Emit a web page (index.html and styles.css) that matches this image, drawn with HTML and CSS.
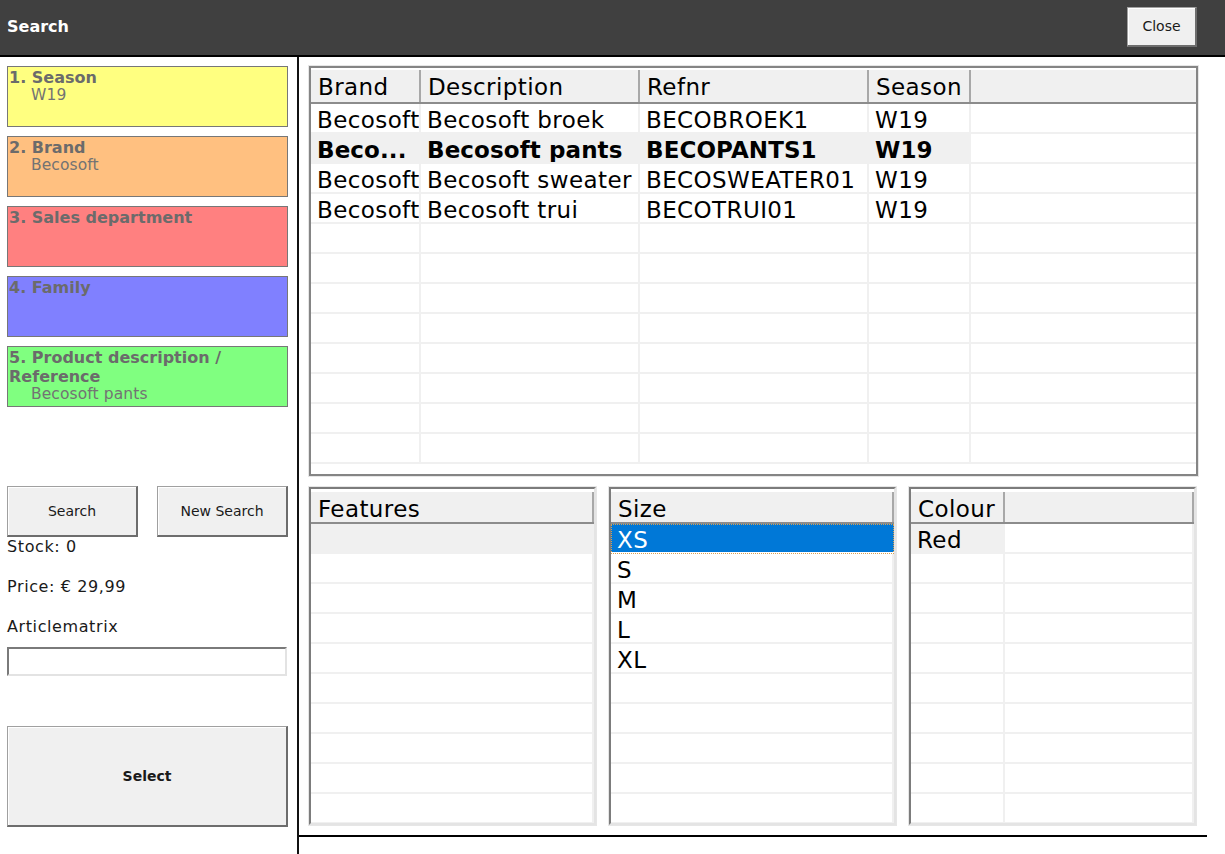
FILE: index.html
```html
<!DOCTYPE html>
<html lang="en">
<head>
    <meta charset="UTF-8">
    <meta name="viewport" content="width=device-width, initial-scale=1.0">
    <title>Search</title>
    <link rel="stylesheet" href="styles.css">
</head>
<body>
    <!-- top bar -->
    <header class="topbar">
        <span class="topbar-title">Search</span>
        <button class="btn btn-close">Close</button>
    </header>

    <div class="layout">
        <!-- left: filters -->
        <aside class="sidebar">
            <div class="filter filter-season">
                <div class="filter-title">1. Season</div>
                <div class="filter-value">W19</div>
            </div>
            <div class="filter filter-brand">
                <div class="filter-title">2. Brand</div>
                <div class="filter-value">Becosoft</div>
            </div>
            <div class="filter filter-dept">
                <div class="filter-title">3. Sales department</div>
            </div>
            <div class="filter filter-family">
                <div class="filter-title">4. Family</div>
            </div>
            <div class="filter filter-product">
                <div class="filter-title">5. Product description / Reference</div>
                <div class="filter-value">Becosoft pants</div>
            </div>

            <div class="actions">
                <button class="btn btn-action">Search</button>
                <button class="btn btn-action">New Search</button>
            </div>
            <p class="info">Stock: 0</p>
            <p class="info">Price: € 29,99</p>
            <p class="info info-label">Articlematrix</p>
            <input class="matrix-input" type="text">
            <button class="btn btn-select">Select</button>
        </aside>

        <!-- right: results -->
        <main class="content">
            <div class="grid grid-articles">
                <div class="row head">
                    <div class="cell">Brand</div>
                    <div class="cell">Description</div>
                    <div class="cell">Refnr</div>
                    <div class="cell">Season</div>
                    <div class="cell"></div>
                </div>
                <div class="row">
                    <div class="cell">Becosoft</div>
                    <div class="cell">Becosoft broek</div>
                    <div class="cell">BECOBROEK1</div>
                    <div class="cell">W19</div>
                    <div class="cell"></div>
                </div>
                <div class="row current">
                    <div class="cell">Beco...</div>
                    <div class="cell">Becosoft pants</div>
                    <div class="cell">BECOPANTS1</div>
                    <div class="cell">W19</div>
                    <div class="cell"></div>
                </div>
                <div class="row">
                    <div class="cell">Becosoft</div>
                    <div class="cell">Becosoft sweater</div>
                    <div class="cell">BECOSWEATER01</div>
                    <div class="cell">W19</div>
                    <div class="cell"></div>
                </div>
                <div class="row">
                    <div class="cell">Becosoft</div>
                    <div class="cell">Becosoft trui</div>
                    <div class="cell">BECOTRUI01</div>
                    <div class="cell">W19</div>
                    <div class="cell"></div>
                </div>
                <div class="row"><div class="cell"></div><div class="cell"></div><div class="cell"></div><div class="cell"></div><div class="cell"></div></div>
                <div class="row"><div class="cell"></div><div class="cell"></div><div class="cell"></div><div class="cell"></div><div class="cell"></div></div>
                <div class="row"><div class="cell"></div><div class="cell"></div><div class="cell"></div><div class="cell"></div><div class="cell"></div></div>
                <div class="row"><div class="cell"></div><div class="cell"></div><div class="cell"></div><div class="cell"></div><div class="cell"></div></div>
                <div class="row"><div class="cell"></div><div class="cell"></div><div class="cell"></div><div class="cell"></div><div class="cell"></div></div>
                <div class="row"><div class="cell"></div><div class="cell"></div><div class="cell"></div><div class="cell"></div><div class="cell"></div></div>
                <div class="row"><div class="cell"></div><div class="cell"></div><div class="cell"></div><div class="cell"></div><div class="cell"></div></div>
                <div class="row"><div class="cell"></div><div class="cell"></div><div class="cell"></div><div class="cell"></div><div class="cell"></div></div>
            </div>

            <div class="subgrids">
                <div class="grid grid-single">
                    <div class="row head"><div class="cell">Features</div></div>
                    <div class="row current"><div class="cell"></div></div>
                    <div class="row"><div class="cell"></div></div>
                    <div class="row"><div class="cell"></div></div>
                    <div class="row"><div class="cell"></div></div>
                    <div class="row"><div class="cell"></div></div>
                    <div class="row"><div class="cell"></div></div>
                    <div class="row"><div class="cell"></div></div>
                    <div class="row"><div class="cell"></div></div>
                    <div class="row"><div class="cell"></div></div>
                    <div class="row"><div class="cell"></div></div>
                </div>
                <div class="grid grid-single">
                    <div class="row head"><div class="cell">Size</div></div>
                    <div class="row selected"><div class="cell">XS</div></div>
                    <div class="row"><div class="cell">S</div></div>
                    <div class="row"><div class="cell">M</div></div>
                    <div class="row"><div class="cell">L</div></div>
                    <div class="row"><div class="cell">XL</div></div>
                    <div class="row"><div class="cell"></div></div>
                    <div class="row"><div class="cell"></div></div>
                    <div class="row"><div class="cell"></div></div>
                    <div class="row"><div class="cell"></div></div>
                    <div class="row"><div class="cell"></div></div>
                </div>
                <div class="grid grid-colour">
                    <div class="row head"><div class="cell">Colour</div><div class="cell"></div></div>
                    <div class="row"><div class="cell marked">Red</div><div class="cell"></div></div>
                    <div class="row"><div class="cell"></div><div class="cell"></div></div>
                    <div class="row"><div class="cell"></div><div class="cell"></div></div>
                    <div class="row"><div class="cell"></div><div class="cell"></div></div>
                    <div class="row"><div class="cell"></div><div class="cell"></div></div>
                    <div class="row"><div class="cell"></div><div class="cell"></div></div>
                    <div class="row"><div class="cell"></div><div class="cell"></div></div>
                    <div class="row"><div class="cell"></div><div class="cell"></div></div>
                    <div class="row"><div class="cell"></div><div class="cell"></div></div>
                    <div class="row"><div class="cell"></div><div class="cell"></div></div>
                </div>
            </div>

            <div class="bottom-line"></div>
        </main>
    </div>
</body>
</html>
```

FILE: styles.css
```css
/*global*/
* {
    margin: 0;
    padding: 0;
    box-sizing: border-box;
}

body {
    font-family: "DejaVu Sans", Verdana, sans-serif;
    background-color: #fff;
    color: #1a1a1a;
    height: 854px;
    overflow: hidden;
}

/*buttons*/
.btn {
    font-family: inherit;
    font-size: 14px;
    color: #1a1a1a;
    background-color: #f0f0f0;
    border: 1px solid #a0a0a0;
    border-right: 2px solid #6d6d6d;
    border-bottom: 2px solid #6d6d6d;
    box-shadow: inset 1px 1px 0 #fff;
    cursor: pointer;
}

/*top bar*/
.topbar {
    height: 57px;
    background-color: #404040;
    border-bottom: 2px solid #000;
    display: flex;
    align-items: center;
    justify-content: space-between;
    padding: 0 28px 2px 7px;
}

.topbar-title {
    color: #fff;
    font-weight: bold;
    font-size: 16px;
}

.btn-close {
    width: 70px;
    height: 40px;
}

/*layout*/
.layout {
    display: flex;
    height: calc(854px - 57px);
}

/*sidebar*/
.sidebar {
    width: 299px;
    border-right: 2px solid #111;
    padding: 9px 9px 0 7px;
}

.filter {
    height: 61px;
    margin-bottom: 9px;
    border: 1px solid #777;
    color: #6b6b6b;
    font-size: 16px;
    line-height: 19px;
    padding: 1px 1px 0;
    overflow: hidden;
}

.filter-title {
    font-weight: bold;
}

.filter-value {
    padding-left: 22px;
    margin-top: -1px;
    color: #737373;
    font-size: 15.5px;
    letter-spacing: 0.1px;
}

.filter-season { background-color: #ffff80; }
.filter-brand { background-color: #ffc080; }
.filter-dept { background-color: #ff8080; }
.filter-family { background-color: #8080ff; }
.filter-product { background-color: #80ff80; }

.actions {
    display: flex;
    justify-content: space-between;
    margin-top: 79px;
}

.btn-action {
    width: 131px;
    height: 51px;
}

.info {
    font-size: 16px;
    line-height: 19px;
    letter-spacing: 0.6px;
    height: 40px;
}

.info-label {
    height: 30px;
}

.matrix-input {
    display: block;
    width: 280px;
    height: 29px;
    border: 2px solid;
    border-color: #7a7a7a #e3e3e3 #e3e3e3 #7a7a7a;
    background-color: #fff;
    outline: none;
}

.btn-select {
    display: block;
    margin-top: 50px;
    width: 281px;
    height: 101px;
    font-weight: bold;
}

/*content*/
.content {
    width: 908px;
    padding: 9px 9px 0 10px;
    display: flex;
    flex-direction: column;
}

/*grids*/
.grid {
    border: 2px solid;
    border-color: #7c7c7c #e4e4e4 #e4e4e4 #7c7c7c;
    box-shadow: 0 0 0 1px #e6e6e6;
    padding-top: 2px;
    overflow: hidden;
    font-size: 23px;
    letter-spacing: 0.4px;
    color: #000;
}

.row {
    display: grid;
    height: 30px;
    border-bottom: 2px solid #f0f0f0;
}

.cell {
    border-right: 2px solid #f0f0f0;
    padding: 2px 0 0 6px;
    line-height: 28px;
    white-space: nowrap;
    overflow: hidden;
}

.row.head {
    height: 34px;
    background-color: #f0f0f0;
    border-bottom: 2px solid #8c8c8c;
}

.row.head .cell {
    border-right: 2px solid #a8a8a8;
    padding: 2px 0 0 7px;
    line-height: 31px;
}

.row.current {
    font-weight: bold;
    letter-spacing: 0.1px;
}

.grid-articles {
    height: 410px;
    border-color: #858585;
}

.grid-articles .row {
    grid-template-columns: 110px 219px 229px 102px 1fr;
}

.grid-articles .row.current .cell:not(:last-child) {
    background-color: #f0f0f0;
}

.grid-articles .row .cell:last-child {
    border-right: none;
}

.subgrids {
    margin-top: 11px;
    display: grid;
    grid-template-columns: repeat(3, 287px);
    gap: 13px;
    height: 338px;
}

.subgrids .grid {
    padding-top: 3px;
}

.subgrids .row.head {
    height: 32px;
}

.grid-single .row {
    grid-template-columns: 1fr;
}

.grid-single .row.current {
    background-color: #f0f0f0;
}

.grid-single .row.selected {
    background-color: #0078d7;
    color: #fff;
    outline: 1px dotted #d8a050;
    outline-offset: -1px;
    border-bottom-color: #fff;
}

.grid-single .row.selected .cell {
    border-right: none;
}

.grid-colour .row {
    grid-template-columns: 94px 1fr;
}

.grid-colour .cell.marked {
    background-color: #f0f0f0;
}

.bottom-line {
    margin-top: 10px;
    margin-left: -10px;
    margin-right: -9px;
    border-top: 2px solid #000;
}
```
